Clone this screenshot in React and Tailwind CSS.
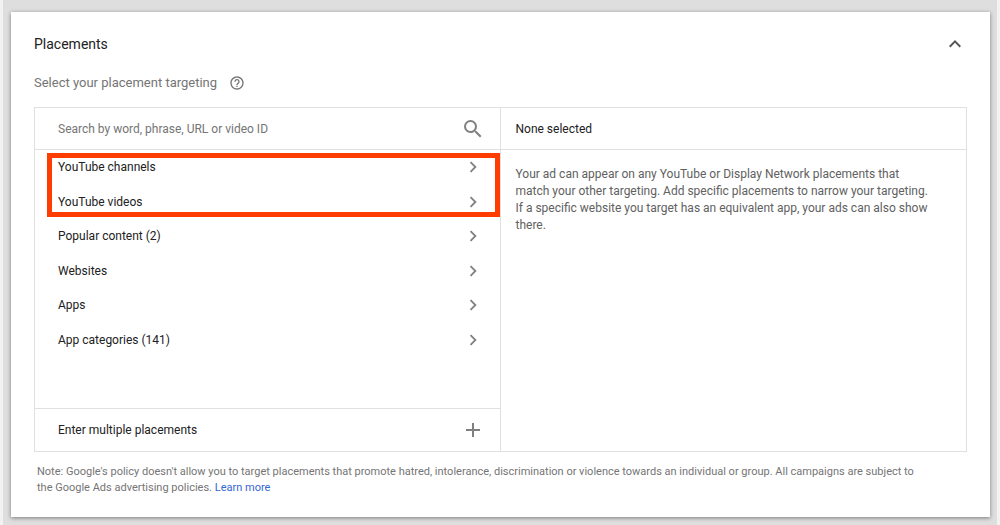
import React from "react";

const categories = [
  "YouTube channels",
  "YouTube videos",
  "Popular content (2)",
  "Websites",
  "Apps",
  "App categories (141)",
];

function Icon({ d, className }) {
  return (
    <svg viewBox="0 0 24 24" fill="currentColor" aria-hidden="true" className={className}>
      <path d={d} />
    </svg>
  );
}

const SEARCH =
  "M15.5 14h-.79l-.28-.27A6.471 6.471 0 0 0 16 9.5 6.5 6.5 0 1 0 9.5 16c1.61 0 3.09-.59 4.23-1.57l.27.28v.79l5 4.99L20.49 19l-4.99-5zm-6 0C7.01 14 5 11.99 5 9.5S7.01 5 9.5 5 14 7.01 14 9.5 11.99 14 9.5 14z";
const CHEVRON_RIGHT = "M10 6L8.59 7.41 13.17 12l-4.58 4.59L10 18l6-6z";
const CHEVRON_UP = "M12 8l-6 6 1.41 1.41L12 10.83l4.59 4.58L18 14z";
const PLUS = "M19 13h-6v6h-2v-6H5v-2h6V5h2v6h6v2z";
const HELP =
  "M11 18h2v-2h-2v2zm1-16C6.48 2 2 6.48 2 12s4.48 10 10 10 10-4.48 10-10S17.52 2 12 2zm0 18c-4.41 0-8-3.59-8-8s3.59-8 8-8 8 3.59 8 8-3.59 8-8 8zm0-14c-2.21 0-4 1.79-4 4h2c0-1.1.9-2 2-2s2 .9 2 2c0 2-3 1.75-3 5h2c0-2.25 3-2.5 3-5 0-2.21-1.79-4-4-4z";

function SearchField() {
  return (
    <div className="flex h-[42px] items-center border-b border-[#e0e0e0] pr-[15px] pl-[23px]">
      <input
        type="text"
        aria-label="Search placements"
        placeholder="Search by word, phrase, URL or video ID"
        className="min-w-0 flex-1 bg-transparent text-[12px] leading-5 outline-none placeholder:text-[#757575]"
      />
      <button type="button" aria-label="Search" className="text-[#808080]">
        <Icon d={SEARCH} className="size-6" />
      </button>
    </div>
  );
}

function CategoryList() {
  return (
    <div className="relative flex-1 pb-[51px]">
      <ul className="grid h-[207px] grid-rows-6">
        {categories.map((name) => (
          <li key={name} className="flex">
            <button
              type="button"
              className="flex flex-1 items-center justify-between pr-4 pl-[23px] text-left text-[12px] leading-5"
            >
              {name}
              <Icon d={CHEVRON_RIGHT} className="size-[22px] text-[#808080]" />
            </button>
          </li>
        ))}
      </ul>
      <div className="pointer-events-none absolute top-[3px] right-0 left-3 h-16 border-5 border-[#ff3d00]" />
    </div>
  );
}

export default function App() {
  return (
    <div className="min-h-screen border-x-3 border-[#f2f2f2] bg-[#dedede] px-2 pt-3 pb-2 font-[Roboto,sans-serif] text-[#212121]">
      <main className="mr-[-1px] bg-white px-[23px] pt-5 pb-[21px] shadow-[0_1px_4px_rgba(0,0,0,0.45)]">
        <header className="flex items-center justify-between">
          <h1 className="text-[14px] leading-6">Placements</h1>
          <button type="button" aria-label="Collapse placements" className="text-[#555555]">
            <Icon d={CHEVRON_UP} className="size-6" />
          </button>
        </header>

        <div className="mt-[17px] flex items-center gap-3 text-[#757575]">
          <h2 className="text-[13px] leading-5">Select your placement targeting</h2>
          <button type="button" aria-label="Help">
            <Icon d={HELP} className="size-4" />
          </button>
        </div>

        <div className="mt-[14px] grid grid-cols-2 border border-[#e0e0e0]">
          <section className="flex flex-col border-r border-[#e0e0e0]">
            <SearchField />
            <CategoryList />
            <button
              type="button"
              className="flex h-[43px] items-center justify-between border-t border-[#e0e0e0] pr-[15px] pl-[23px] text-[12px] leading-5"
            >
              Enter multiple placements
              <Icon d={PLUS} className="size-6 text-[#808080]" />
            </button>
          </section>

          <section>
            <h3 className="flex h-[42px] items-center border-b border-[#e0e0e0] px-[15px] text-[12px] leading-5">
              None selected
            </h3>
            <p className="pt-4 pr-8 pl-[15px] text-[12px] leading-[17px] text-[#616161]">
              Your ad can appear on any YouTube or Display Network placements that match your other
              targeting. Add specific placements to narrow your targeting. If a specific website you
              target has an equivalent app, your ads can also show there.
            </p>
          </section>
        </div>

        <p className="mt-3 pr-9 pl-[3px] text-[11px] leading-4 text-[#757575]">
          Note: Google's policy doesn't allow you to target placements that promote hatred,
          intolerance, discrimination or violence towards an individual or group. All campaigns are
          subject to the Google Ads advertising policies.{" "}
          <a href="#learn-more" className="text-[#3367d6]">
            Learn more
          </a>
        </p>
      </main>
    </div>
  );
}
